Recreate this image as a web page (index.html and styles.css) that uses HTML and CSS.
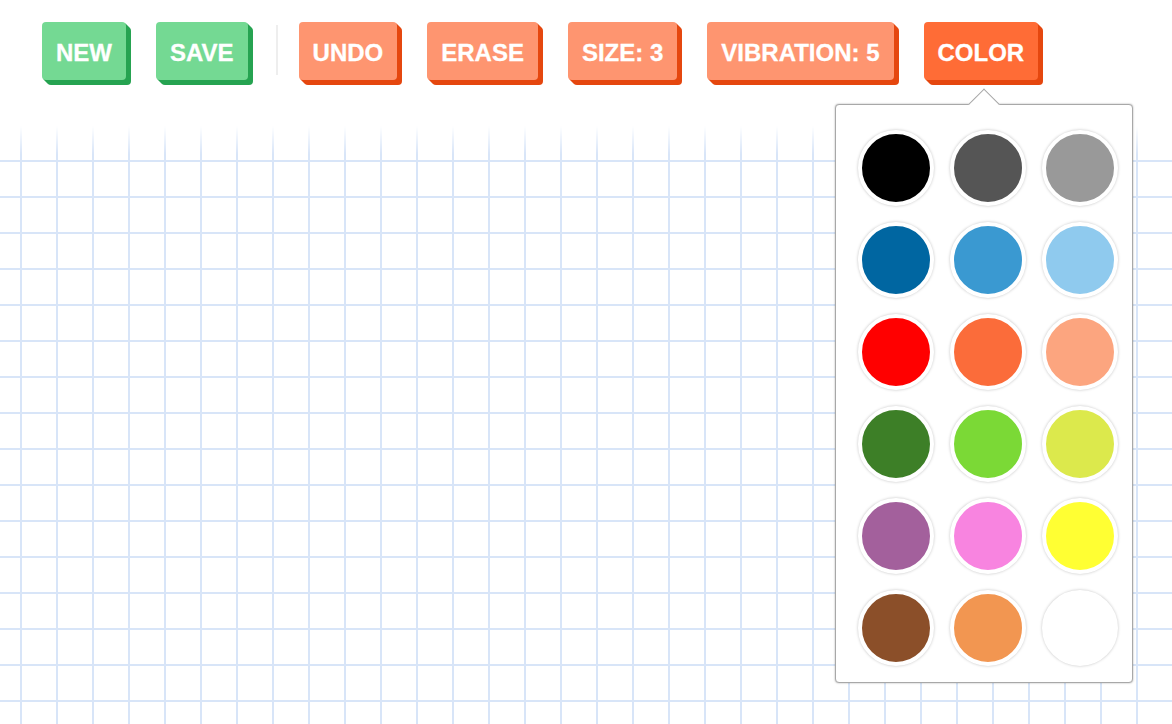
FILE: index.html
```html
<!DOCTYPE html>
<html>
<head>
  <title>Sketch Pad</title>
  <link rel="stylesheet" href="styles.css">
</head>
<body>

  <div class="toolbar">
    <button class="btn btn-green">NEW</button>
    <button class="btn btn-green">SAVE</button>
    <span class="divider"></span>
    <button class="btn btn-orange">UNDO</button>
    <button class="btn btn-orange">ERASE</button>
    <button class="btn btn-orange">SIZE: 3</button>
    <button class="btn btn-orange">VIBRATION: 5</button>
    <button class="btn btn-orange active">COLOR</button>
  </div>

  <div class="canvas"></div>

  <div class="color-popup">
    <span class="arrow"></span>
    <div class="swatches">
      <span class="swatch" style="background:#000000"></span>
      <span class="swatch" style="background:#555555"></span>
      <span class="swatch" style="background:#999999"></span>
      <span class="swatch" style="background:#0066a1"></span>
      <span class="swatch" style="background:#3a99d1"></span>
      <span class="swatch" style="background:#8fcaee"></span>
      <span class="swatch" style="background:#ff0000"></span>
      <span class="swatch" style="background:#fb6c3a"></span>
      <span class="swatch" style="background:#fca57f"></span>
      <span class="swatch" style="background:#3d7f27"></span>
      <span class="swatch" style="background:#7bd936"></span>
      <span class="swatch" style="background:#dce94c"></span>
      <span class="swatch" style="background:#a3609c"></span>
      <span class="swatch" style="background:#f884e0"></span>
      <span class="swatch" style="background:#ffff33"></span>
      <span class="swatch" style="background:#8b4f29"></span>
      <span class="swatch" style="background:#f29651"></span>
      <span class="swatch" style="background:#ffffff"></span>
    </div>
  </div>

</body>
</html>
```

FILE: styles.css
```css
body {
  margin: 0;
  font-family: "Liberation Sans", Arial, sans-serif;
  background-color: #fff;
  height: 724px;
  overflow: hidden;
  display: flex;
  flex-direction: column;
}

/* top buttons */
.toolbar {
  display: flex;
  align-items: flex-start;
  gap: 30px;
  padding: 22px 42px 0;
  height: 104px;
  box-sizing: border-box;
}

.btn {
  height: 58px;
  padding: 3px 14px 0;
  border: none;
  border-radius: 4px;
  font-family: inherit;
  font-size: 24px;
  font-weight: bold;
  color: #fff;
  cursor: pointer;
  -webkit-text-stroke: 0.3px #fff;
}

.btn-green {
  background-color: #74d993;
  box-shadow: 1px 1px 0 #26a351, 2px 2px 0 #26a351, 3px 3px 0 #26a351, 4px 4px 0 #26a351, 5px 5px 0 #26a351;
}

.btn-orange {
  background-color: #fe9570;
  box-shadow: 1px 1px 0 #e5470f, 2px 2px 0 #e5470f, 3px 3px 0 #e5470f, 4px 4px 0 #e5470f, 5px 5px 0 #e5470f;
}

.btn-orange.active {
  background-color: #ff6c36;
}

.divider {
  width: 2px;
  height: 50px;
  margin: 3px -9px 0 -2px;
  background-color: #eeeeee;
}

/* graph paper */
.canvas {
  flex: 1;
  margin-top: 22px;
  background-image:
    linear-gradient(to right, #d8e5f8 2px, transparent 2px),
    linear-gradient(to bottom, #d8e5f8 2px, transparent 2px);
  background-size: 36px 36px;
  background-position: 20px 34px;
  -webkit-mask-image: linear-gradient(to bottom, transparent 0, #000 28px);
  mask-image: linear-gradient(to bottom, transparent 0, #000 28px);
}

/* color picker */
.color-popup {
  position: absolute;
  left: 835px;
  top: 104px;
  width: 298px;
  height: 579px;
  box-sizing: border-box;
  padding: 25px 0 0 22px;
  background-color: #fff;
  border: 1px solid #a8a8a8;
  border-radius: 4px;
  box-shadow: 0 0 2px rgba(0, 0, 0, 0.35);
}

.arrow {
  position: absolute;
  top: -12px;
  left: calc(50% - 11px);
  width: 22px;
  height: 22px;
  background-color: #fff;
  border-top: 1px solid #a8a8a8;
  border-left: 1px solid #a8a8a8;
  box-sizing: border-box;
  transform: rotate(45deg);
}

.swatches {
  display: grid;
  grid-template-columns: repeat(3, 76px);
  gap: 16px;
}

.swatch {
  width: 76px;
  height: 76px;
  box-sizing: border-box;
  border: 4px solid #fff;
  border-radius: 50%;
  box-shadow: 0 0 3px rgba(0, 0, 0, 0.25);
}
```
